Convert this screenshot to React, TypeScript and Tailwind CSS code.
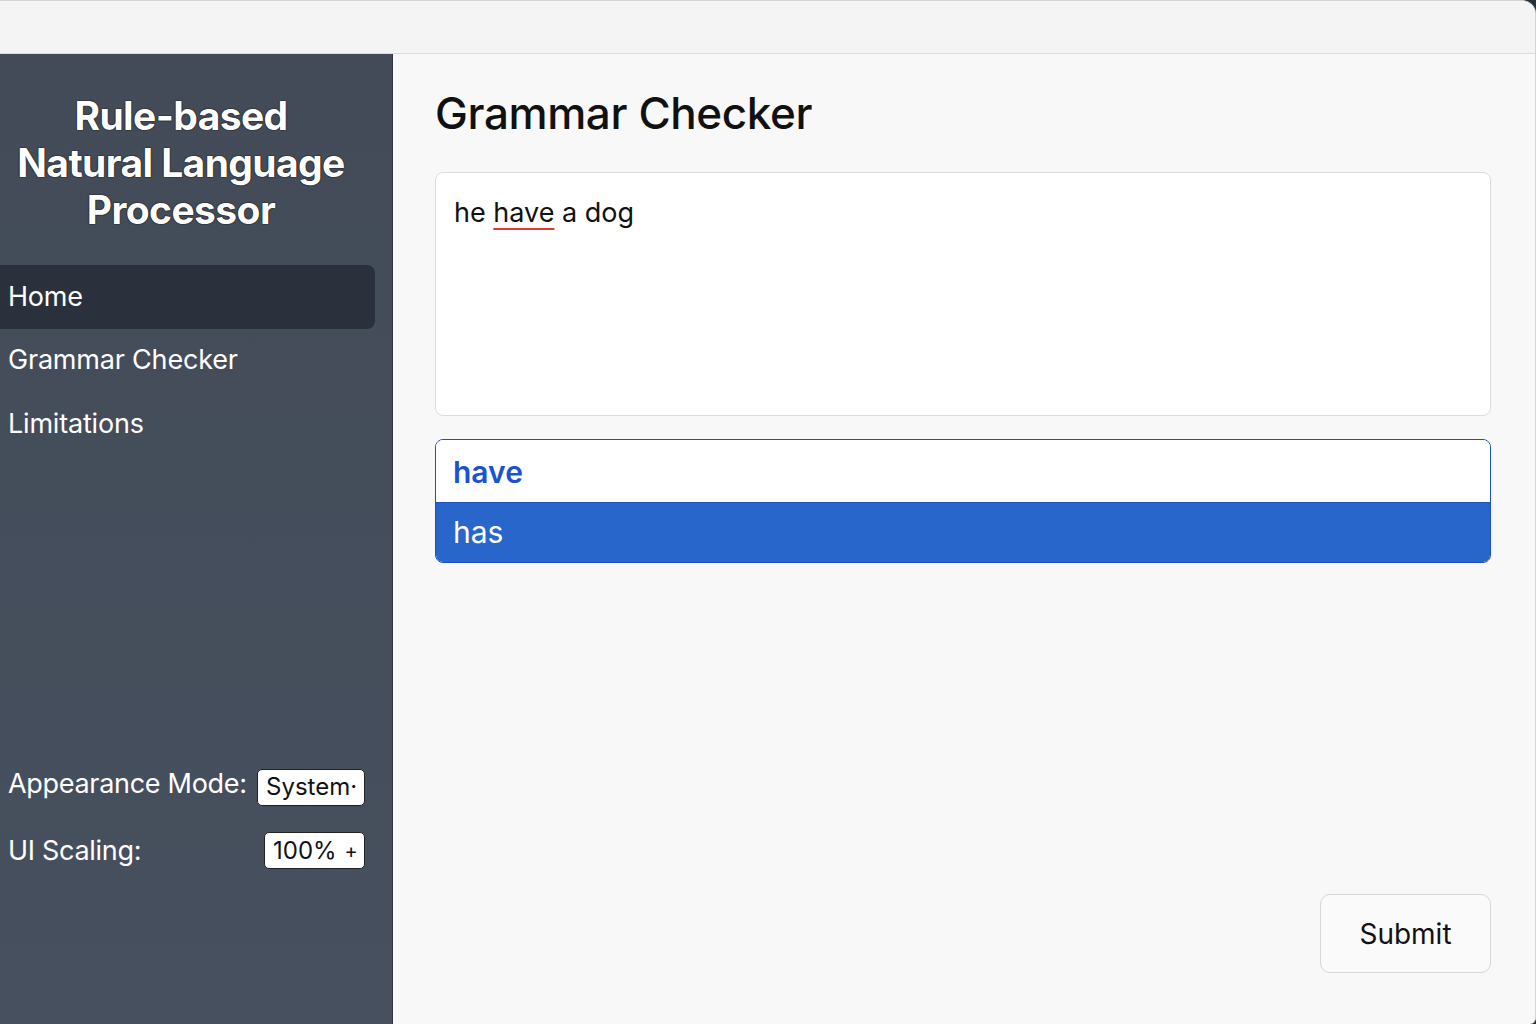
import React from "react";

export default function App() {
  const font = { fontFamily: "Inter, 'Noto Sans', 'Liberation Sans', sans-serif" };
  return (
    <div className="w-[1536px] h-[1024px] bg-[#2a303b] overflow-hidden" style={font}>
      <div className="w-[1536px] h-[1024px] flex flex-col bg-[#f8f8f8] rounded-tr-[14px] rounded-br-[6px] border-t border-r border-[#d4d4d4] overflow-hidden">
        <div className="h-[53px] shrink-0 bg-[#f4f4f4] border-b border-[#dcdcdc]" />
        <div className="flex flex-1 min-h-0">
          <aside className="w-[393px] shrink-0 bg-gradient-to-b from-[#434b58] to-[#46505e] border-r border-[#30353f] flex flex-col pt-[38px] pb-[153px]">
            <h1
              className="text-white font-bold text-[39px] leading-[47px] tracking-[-0.6px] text-center pr-[30px]"
              style={{ textShadow: "0 0 1px #111, 0 0 1px #111, 0 0 1px #111" }}
            >
              Rule-based
              <br />
              Natural Language
              <br />
              Processor
            </h1>
            <nav className="mt-[32px] flex flex-col pr-[17px]">
              <div className="h-[64px] flex items-center pl-[8px] bg-[#2b313c] rounded-r-[8px] text-white text-[27px] tracking-[-0.2px]">
                Home
              </div>
              <div className="h-[63px] flex items-center pl-[8px] text-white text-[27px] tracking-[-0.2px]">Grammar Checker</div>
              <div className="h-[64px] flex items-center pl-[8px] text-white text-[27px] tracking-[-0.2px]">Limitations</div>
            </nav>
            <div className="flex-1" />
            <div className="flex flex-col gap-[25px] pl-[8px] pr-[27px]">
              <div className="flex items-center justify-between">
                <span className="text-white text-[27px] tracking-[-0.3px]">Appearance Mode:</span>
                <span className="h-[37px] w-[108px] bg-white rounded-[5px] border border-[#222] text-[#111] text-[24px] flex items-center pl-[8px] overflow-hidden whitespace-nowrap mt-[6px]">
                  System·
                </span>
              </div>
              <div className="flex items-center justify-between">
                <span className="text-white text-[27px] tracking-[-0.3px]">UI Scaling:</span>
                <span className="h-[37px] w-[101px] bg-white rounded-[5px] border border-[#222] text-[#111] text-[24px] flex items-center pl-[8px] whitespace-nowrap">
                  100% <span className="ml-[8px] text-[20px]">+</span>
                </span>
              </div>
            </div>
          </aside>
          <main className="flex-1 flex flex-col pl-[42px] pr-[44px] pt-[34px] pb-[51px]">
            <h2 className="text-[44px] font-medium text-[#111] leading-[50px] tracking-[-0.4px]">Grammar Checker</h2>
            <div className="mt-[34px] h-[244px] bg-white border border-[#dcdcdc] rounded-[8px] px-[18px] pt-[20px] text-[27px] text-[#111]">
              he{" "}
              <span className="underline decoration-[#e53935] decoration-[1.5px] underline-offset-[6px]">have</span> a dog
            </div>
            <div className="mt-[23px] border-[1.5px] border-[#1a4fc9] rounded-[8px] overflow-hidden">
              <div className="h-[62px] bg-white flex items-center pl-[17px] pt-[3px] text-[30px] font-semibold text-[#1a52d0]">have</div>
              <div className="h-[60px] bg-[#2866cc] border-t border-[#1f57c0] flex items-center pl-[17px] text-[30px] text-white">
                has
              </div>
            </div>
            <div className="flex-1" />
            <div className="flex justify-end">
              <button className="w-[171px] h-[79px] rounded-[10px] border border-[#d6d6d6] bg-[#fafafa] text-[28px] text-[#111]">
                Submit
              </button>
            </div>
          </main>
        </div>
      </div>
    </div>
  );
}
